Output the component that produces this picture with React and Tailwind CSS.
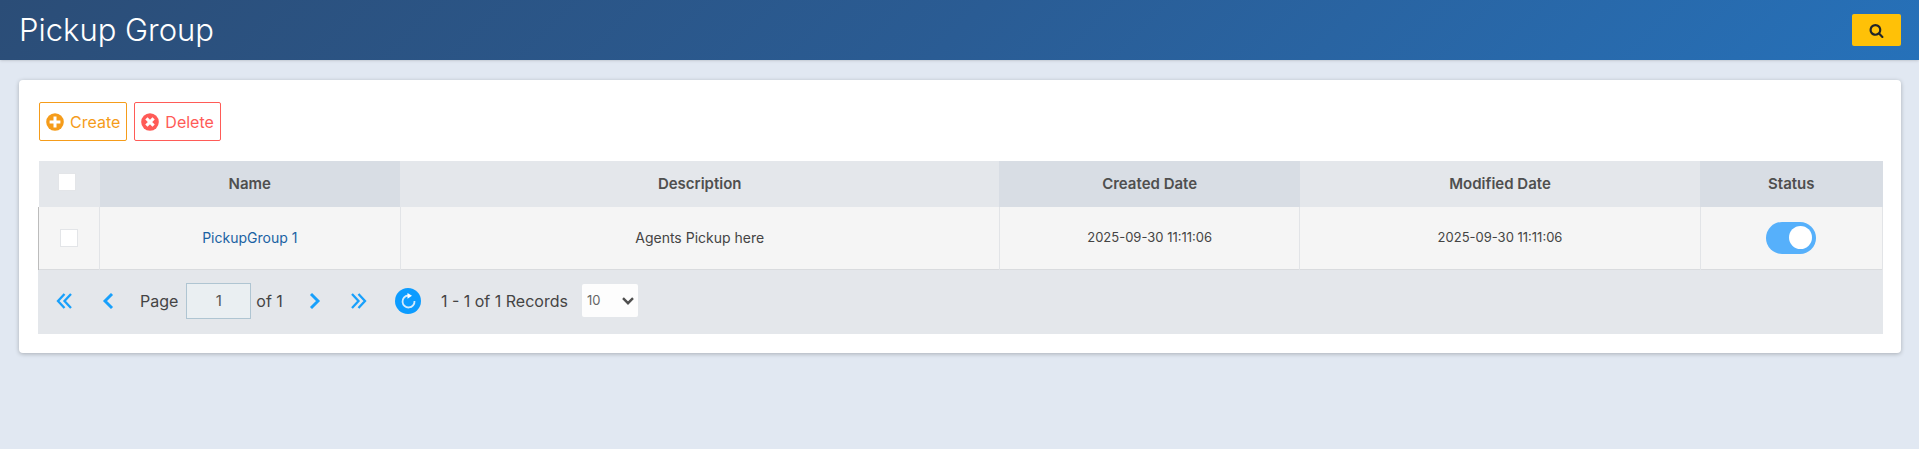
import React, { useState } from 'react';

const columns = [
  { label: 'Name', width: 'w-[16.3%]', bg: 'bg-[#d8dde4]' },
  { label: 'Description', width: 'w-[32.5%]', bg: '' },
  { label: 'Created Date', width: 'w-[16.3%]', bg: 'bg-[#d8dde4]' },
  { label: 'Modified Date', width: 'w-[21.7%]', bg: '' },
  { label: 'Status', width: '', bg: 'bg-[#d8dde4]' },
];

const initialGroups = [
  {
    id: 1,
    name: 'PickupGroup 1',
    description: 'Agents Pickup here',
    created: '2025-09-30 11:11:06',
    modified: '2025-09-30 11:11:06',
    active: true,
  },
];

const checkboxClass =
  'block mx-auto size-[18px] appearance-none border border-[#e3e5e8] bg-white checked:bg-[#0c9cff]';

const SearchIcon = () => (
  <svg className="size-[15px]" viewBox="0 0 1792 1792" fill="currentColor">
    <path d="M1216 832q0-185-131.5-316.5t-316.5-131.5-316.5 131.5-131.5 316.5 131.5 316.5 316.5 131.5 316.5-131.5 131.5-316.5zm512 832q0 52-38 90t-90 38q-54 0-90-38l-343-342q-179 124-399 124-143 0-273.5-55.5t-225-150-150-225-55.5-273.5 55.5-273.5 150-225 225-150 273.5-55.5 273.5 55.5 225 150 150 225 55.5 273.5q0 220-124 399l343 343q37 37 37 90z" />
  </svg>
);

const PlusCircle = () => (
  <svg className="size-[18px]" viewBox="0 0 18 18">
    <circle cx="9" cy="9" r="8.8" fill="currentColor" />
    <path d="M9 3.6v10.8M3.6 9h10.8" stroke="#fff" strokeWidth="3" fill="none" />
  </svg>
);

const CrossCircle = () => (
  <svg className="size-[18px]" viewBox="0 0 18 18">
    <circle cx="9" cy="9" r="8.8" fill="currentColor" />
    <path d="M5.4 5.4l7.2 7.2M12.6 5.4l-7.2 7.2" stroke="#fff" strokeWidth="3.2" fill="none" />
  </svg>
);

const Chevron = ({ double, right }) => (
  <svg
    className={right ? 'h-4 w-4' : 'h-4 w-4 rotate-180'}
    viewBox="0 0 16 16"
    fill="none"
    stroke="#18a0fb"
    strokeWidth={double ? 2.3 : 2.9}
  >
    {double ? <path d="M1 1l6.5 7L1 15M7.5 1L14 8l-6.5 7" /> : <path d="M4 1l7 7-7 7" />}
  </svg>
);

const PagerButton = ({ label, double, right }) => (
  <button type="button" aria-label={label} className="flex h-8 w-8 items-center justify-center cursor-pointer">
    <Chevron double={double} right={right} />
  </button>
);

const App = () => {
  const [groups, setGroups] = useState(initialGroups);
  const [selected, setSelected] = useState([]);
  const [page, setPage] = useState('1');
  const [pageSize, setPageSize] = useState('10');

  const allSelected = groups.length > 0 && selected.length === groups.length;

  const toggleAll = () => {
    setSelected(allSelected ? [] : groups.map((g) => g.id));
  };

  const toggleOne = (id) => {
    setSelected(selected.includes(id) ? selected.filter((s) => s !== id) : [...selected, id]);
  };

  const toggleStatus = (id) => {
    setGroups(groups.map((g) => (g.id === id ? { ...g, active: !g.active } : g)));
  };

  return (
    <div className="min-h-screen bg-[#e1e8f2] font-['Inter',sans-serif] text-[#444]">
      {/* Page header */}
      <header className="flex h-[60px] items-center justify-between bg-linear-135 from-[#2b4d77] via-[#2a5c94] to-[#2671b9] pr-[18px] pl-[19px] shadow-sm">
        <h1 className="text-[31px] leading-9 font-light text-white">Pickup Group</h1>
        <button
          type="button"
          aria-label="Search"
          className="flex h-8 w-[49px] items-center justify-center rounded-xs bg-[#ffc107] text-[#212529] cursor-pointer"
        >
          <SearchIcon />
        </button>
      </header>

      <main className="mt-5 mr-[18px] ml-[19px] rounded-sm bg-white pt-[22px] pr-[18px] pb-[19px] pl-[19px] shadow-[0_1px_4px_rgba(0,0,0,0.25)]">
        {/* Actions */}
        <div className="mb-5 flex gap-[7px] pl-px">
          <button
            type="button"
            className="flex h-[39px] items-center gap-[6px] rounded-xs border border-[#f59c1a] px-[6px] text-base text-[#f59c1a] cursor-pointer"
          >
            <PlusCircle />
            Create
          </button>
          <button
            type="button"
            className="flex h-[39px] items-center gap-[6px] rounded-xs border border-[#ff5b57] px-[6px] text-base text-[#ff5b57] cursor-pointer"
          >
            <CrossCircle />
            Delete
          </button>
        </div>

        {/* Groups table */}
        <table className="w-full table-fixed border-collapse text-center text-sm">
          <thead>
            <tr className="h-[46px] bg-[#e4e7eb]">
              <th className="w-[61px] pr-1 pb-1">
                <input
                  type="checkbox"
                  aria-label="Select all groups"
                  checked={allSelected}
                  onChange={toggleAll}
                  className={checkboxClass}
                />
              </th>
              {columns.map((col) => (
                <th key={col.label} className={`${col.width} ${col.bg} text-[15px] font-semibold text-[#4f4f4f]`}>
                  {col.label}
                </th>
              ))}
            </tr>
          </thead>
          <tbody>
            {groups.map((group) => (
              <tr key={group.id} className="h-[62px] border-b border-[#d9dbde] bg-[#f5f5f5]">
                <td className="border-r border-l border-r-[#e2e4e7] border-l-[#bcbcbc] pr-px">
                  <input
                    type="checkbox"
                    aria-label={`Select ${group.name}`}
                    checked={selected.includes(group.id)}
                    onChange={() => toggleOne(group.id)}
                    className={checkboxClass}
                  />
                </td>
                <td className="border-r border-[#e2e4e7]">
                  <a href="#" className="text-[#1a62a3]">{group.name}</a>
                </td>
                <td className="border-r border-[#e2e4e7]">{group.description}</td>
                <td className="border-r border-[#e2e4e7] text-[13px]">{group.created}</td>
                <td className="border-r border-[#e2e4e7] text-[13px]">{group.modified}</td>
                <td className="border-r border-[#e2e4e7]">
                  <label className="inline-flex h-8 w-[50px] cursor-pointer items-center rounded-full bg-[#b5b5b5] px-1 align-middle has-checked:justify-end has-checked:bg-[#56b0fb]">
                    <input
                      type="checkbox"
                      aria-label={`${group.name} status`}
                      checked={group.active}
                      onChange={() => toggleStatus(group.id)}
                      className="size-[23px] cursor-pointer appearance-none rounded-full bg-white"
                    />
                  </label>
                </td>
              </tr>
            ))}
          </tbody>
        </table>

        {/* Pager */}
        <div className="flex h-16 items-center bg-[#e4e7eb] pb-[2px] pl-[10px] text-base">
          <div className="flex gap-3">
            <PagerButton label="First page" double />
            <PagerButton label="Previous page" />
          </div>
          <label className="ml-4 flex items-center gap-2">
            Page
            <input
              type="text"
              value={page}
              onChange={(e) => setPage(e.target.value)}
              className="h-9 w-[65px] border border-[#afc5d2] bg-[#eaeff2] text-center text-[15px] text-[#555]"
            />
          </label>
          <span className="ml-[5px]">of 1</span>
          <div className="ml-4 flex gap-3">
            <PagerButton label="Next page" right />
            <PagerButton label="Last page" double right />
          </div>
          <button
            type="button"
            aria-label="Reload"
            className="ml-5 flex size-[26px] items-center justify-center rounded-full bg-[#0c9cff] cursor-pointer"
          >
            <svg className="size-4" viewBox="0 0 16 16" fill="none" stroke="#d3ebfd" strokeWidth="1.8">
              <path d="M8 2.5A6 6 0 1 0 14.5 8" />
              <path d="M7.5 0l4.5 2.7-4.5 3z" fill="#fff" stroke="none" />
            </svg>
          </button>
          <span className="ml-5">1 - 1 of 1 Records</span>
          <div className="ml-[14px] grid items-center">
            <select
              aria-label="Records per page"
              value={pageSize}
              onChange={(e) => setPageSize(e.target.value)}
              className="col-start-1 row-start-1 h-[33px] w-14 appearance-none rounded-xs bg-[#fdfdfd] pl-[5px] text-[13px] text-[#666]"
            >
              <option>10</option>
              <option>20</option>
              <option>50</option>
              <option>100</option>
            </select>
            <svg
              className="pointer-events-none col-start-1 row-start-1 mr-1 h-2 w-3 justify-self-end"
              viewBox="0 0 12 8"
              fill="none"
              stroke="#4f4f4f"
              strokeWidth="2.4"
            >
              <path d="M1 1.2l5 5 5-5" />
            </svg>
          </div>
        </div>
      </main>
    </div>
  );
};

export default App;
